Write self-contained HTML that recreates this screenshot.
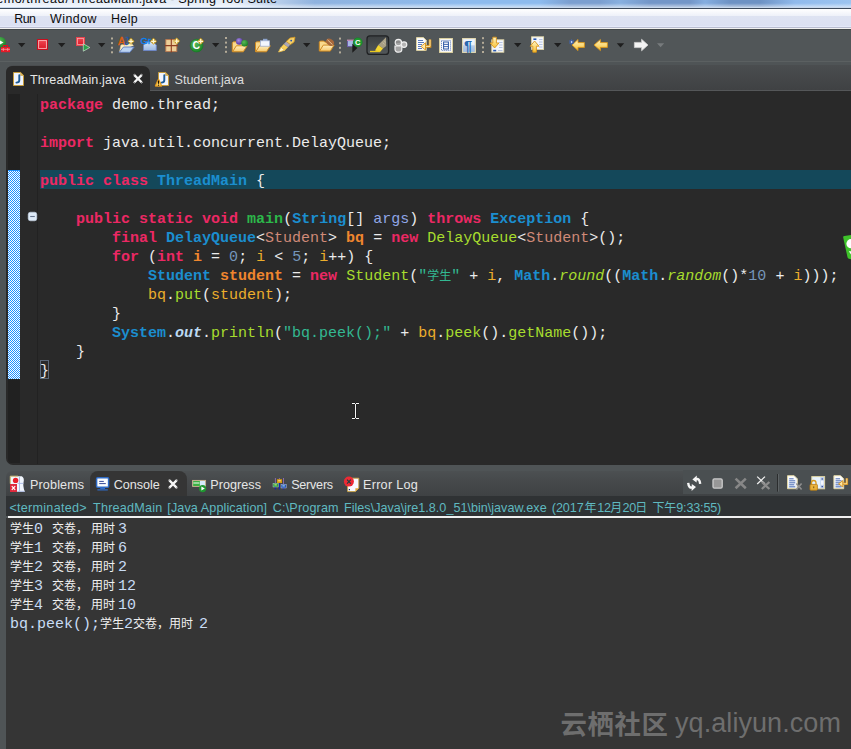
<!DOCTYPE html>
<html lang="zh">
<head>
<meta charset="utf-8">
<title>ThreadMain.java - Spring Tool Suite</title>
<style>
html,body{margin:0;padding:0;}
body{width:851px;height:749px;overflow:hidden;position:relative;background:#4f5456;font-family:"Liberation Sans","Noto Sans CJK SC",sans-serif;}
.abs{position:absolute;}
#title{left:0;top:0;width:851px;height:7px;overflow:hidden;background:linear-gradient(180deg,rgba(255,255,255,0) 45%,rgba(255,255,255,0.5) 100%),linear-gradient(90deg,#e8eff9 0,#e5edf8 235px,rgba(229,237,248,0) 315px),linear-gradient(90deg,#8fb2de 300px,#8dbbee 470px,#8dbbee 540px,#7b9fd0 570px,#7b9fd0 600px,#88b0e0 620px,#7396c8 650px,#7396c8 690px,#85aee0 705px,#6d92c4 730px,#6d92c4 760px,#90baec 795px,#9cc4f0 851px);}
#title .t{position:absolute;top:-8.8px;font-size:12.6px;color:#0a0a0a;white-space:pre;line-height:16px;}
#tline0{left:0;top:7px;width:851px;height:1px;background:#c8d8ec;}
#tline{left:0;top:8px;width:851px;height:1px;background:#3c4a5c;}
#menu{left:0;top:9px;width:851px;height:18px;background:linear-gradient(180deg,#ffffff 0,#eef1f9 38%,#dee3f2 40%,#dbe0f2 94%,#e4e9f8 95%);}
#menu span{position:absolute;top:2px;font-size:12.4px;line-height:17px;color:#0c0c0c;}
#mline{left:0;top:27px;width:851px;height:1px;background:#b8bcd0;}
#mline2{left:0;top:28px;width:851px;height:1px;background:#f0f0f0;}
#toolbar{left:0;top:29px;width:851px;height:32px;background:#515658;border-top:1px solid #43484a;box-sizing:border-box;}
#tb2{left:0;top:61px;width:851px;height:1px;background:#5b6061;}
/* editor */
#edtabs{left:6px;top:65px;width:845px;height:26px;background:linear-gradient(180deg,#4a4d4f 0,#3f4143 100%);border-top-left-radius:8px;}
#edtabline{left:6px;top:90px;width:845px;height:1px;background:#555759;}
#acttab{left:6px;top:66px;width:144px;height:26px;background:#292929;border-top-left-radius:6px;border-top-right-radius:7px;}
.tabtxt{position:absolute;font-size:12.6px;line-height:16px;color:#e6e6e6;white-space:pre;}
#editor{left:6px;top:91px;width:845px;height:373.5px;background:#292929;border-bottom-left-radius:7px;}
#ruler{left:8px;top:94px;width:12px;height:369px;background:#212121;border-bottom-left-radius:4px;}
#blue{left:8px;top:170px;width:12px;height:209px;background-color:#1e90ff;background-image:linear-gradient(45deg,#fff 25%,transparent 25%,transparent 75%,#fff 75%),linear-gradient(45deg,#fff 25%,transparent 25%,transparent 75%,#fff 75%);border-top:1px solid #1e90ff;box-sizing:border-box;background-size:2px 2px;background-position:1px 0,0 1px;}
#gline{left:37px;top:94px;width:1px;height:370px;background:#222222;}
#hl{left:40px;top:170px;width:811px;height:19px;background:#14485a;}
#brk{left:40px;top:360px;width:9px;height:19px;box-sizing:border-box;border:1px solid #5c6878;}
#code{left:40px;top:96px;font-family:"Liberation Mono","Noto Sans CJK SC",monospace;font-size:15px;line-height:19px;color:#ececec;white-space:pre;}
#code div{height:19px;}
.k{color:#ec2864;font-weight:bold;}
.c{color:#1b8ecf;font-weight:bold;}
.m{color:#2cb84a;font-weight:bold;}
.p{color:#90a6e6;}
.ta{color:#d08a78;}
.vd{color:#f0862e;font-weight:bold;}
.v{color:#ecae2c;}
.n{color:#7596ba;}
.f{color:#a7dc2e;}
.fi{color:#a7dc2e;font-style:italic;}
.s{color:#33b892;}
.o{color:#bcd9f2;font-weight:bold;font-style:italic;}
.cj{display:inline-block;width:12px;font-size:12px;text-align:center;}
/* bottom */
#bttabs{left:6px;top:471px;width:845px;height:25px;background:linear-gradient(180deg,#4c5052 0,#474a4c 35%,#3f4244 100%);border-top-left-radius:6px;}
#bttool{left:683px;top:470px;width:168px;height:24px;background:#4a4f51;}
#contab{left:90px;top:471px;width:97px;height:26px;background:#353535;border-top-left-radius:8px;border-top-right-radius:8px;}
#desc{left:6px;top:495.5px;width:845px;height:20.5px;background:#2f3234;}
#desc span{position:absolute;top:4.8px;font-size:12.6px;line-height:16px;color:#5fb9c0;white-space:pre;}
#desc span.dz{font-size:12px;top:4.1px;}
#wline{left:8px;top:516px;width:843px;height:2px;background:#f0f0f0;}
#console{left:6px;top:518px;width:845px;height:231px;background:#353535;}
#out{left:10px;top:520px;font-family:"Liberation Mono","Noto Sans CJK SC",monospace;font-size:15px;line-height:19px;color:#c8dcf4;white-space:pre;}
#out div{height:19px;}
#out .z{display:inline-block;width:12px;font-size:12px;text-align:center;color:#f0f0f0;}
#out .zl{margin-left:3px;}
#out .zr{margin-right:3px;}
#out .sp{display:inline-block;width:6px;}
#wm1{left:560.5px;top:706px;font-size:26.4px;line-height:38px;color:#6e6e6e;white-space:pre;font-weight:bold;letter-spacing:0.6px;font-family:"Liberation Sans","Noto Sans CJK SC",sans-serif;}
#wm2{left:675px;top:706px;font-size:27px;line-height:34px;color:#6e6e6e;white-space:pre;letter-spacing:0.07px;}
</style>
</head>
<body>
<div id="title" class="abs"><div class="t" style="right:786px;letter-spacing:0.5px">demo/thread</div><div class="t" style="left:65.5px;letter-spacing:0.23px">/ThreadMain.java - Spring Tool Suite</div></div>
<div id="tline0" class="abs"></div><div id="tline" class="abs"></div>
<div id="menu" class="abs"><span style="left:14.2px;letter-spacing:-0.5px">Run</span><span style="left:50px;letter-spacing:0.5px">Window</span><span style="left:111px;letter-spacing:0.4px">Help</span></div>
<div id="mline" class="abs"></div><div id="mline2" class="abs"></div>
<div id="toolbar" class="abs"></div>
<div id="tb2" class="abs"></div>
<!--TB-->
<svg id="tbsvg" class="abs" style="left:0;top:30px" width="851" height="32" viewBox="0 30 851 32">
<defs>
<linearGradient id="gRed" x1="0" y1="0" x2="0" y2="1"><stop offset="0" stop-color="#f04a55"/><stop offset="1" stop-color="#d81424"/></linearGradient>
<linearGradient id="gFold" x1="0" y1="0" x2="0" y2="1"><stop offset="0" stop-color="#fff0c0"/><stop offset="1" stop-color="#f6c76a"/></linearGradient>
<linearGradient id="gYel" x1="0" y1="0" x2="0" y2="1"><stop offset="0" stop-color="#fff6c8"/><stop offset="1" stop-color="#f8c030"/></linearGradient>
<linearGradient id="gBlueBox" x1="0" y1="0" x2="0" y2="1"><stop offset="0" stop-color="#d8e6f8"/><stop offset="1" stop-color="#9cb8e0"/></linearGradient>
<radialGradient id="gGreen" cx="0.4" cy="0.35" r="0.7"><stop offset="0" stop-color="#58b855"/><stop offset="1" stop-color="#168026"/></radialGradient>
<radialGradient id="gPurple" cx="0.4" cy="0.35" r="0.7"><stop offset="0" stop-color="#a890e0"/><stop offset="1" stop-color="#4a2a98"/></radialGradient>
<g id="dd"><path d="M0 0 H7.4 L3.7 4.2 Z" fill="#1e1e1e"/></g>
<g id="sep"><rect x="0" y="0" width="2" height="2"/><rect x="0" y="4.6" width="2" height="2"/><rect x="0" y="9.2" width="2" height="2"/><rect x="0" y="13.8" width="2" height="2"/></g>
<g id="spark"><path d="M3.5 0 L7 3.5 L3.5 7 L0 3.5 Z" fill="#c79a1c"/><path d="M3.5 1.2 V5.8 M1.2 3.5 H5.8" stroke="#fff8d8" stroke-width="1.3"/></g>
<g id="folder"><path d="M0.5 11.5 V2.5 L1.5 1.5 H5 L6 2.5 H11.5 V5" fill="#f9d98c" stroke="#cf8a22"/><path d="M0.7 11.5 L4.5 5.5 H15.3 L11.5 11.5 Z" fill="url(#gFold)" stroke="#cf8a22"/></g>
</defs>
<!-- run ext tools -->
<circle cx="0.5" cy="42.5" r="5.5" fill="url(#gGreen)"/><path d="M-1 40 L3.5 42.5 L-1 45Z" fill="#fff"/>
<path d="M3.5 47 V45.5 H7.5 V47" fill="none" stroke="#e01020" stroke-width="1.2"/><rect x="1" y="47" width="9" height="5.2" fill="#e41a28"/><path d="M1 49.3 H10 M3.3 48 V51 M7.7 48 V51" stroke="#f8a0a0" stroke-width="0.8"/>
<use href="#dd" x="18" y="43"/>
<rect x="37.5" y="39.5" width="10" height="10" fill="url(#gRed)" stroke="#c80e1e"/><rect x="38.6" y="40.6" width="7.8" height="7.8" fill="none" stroke="#f9b4b8" stroke-width="0.9"/>
<use href="#dd" x="58" y="43"/>
<rect x="76.5" y="37.5" width="8" height="8" fill="url(#gRed)" stroke="#e8444e"/><rect x="77.5" y="38.5" width="6" height="6" fill="none" stroke="#f7a6aa" stroke-width="0.8"/>
<path d="M83.3 43.8 L89.8 47.5 L83.3 51.2 Z" fill="#2aa04a" stroke="#e0f0e0" stroke-width="0.6"/>
<use href="#dd" x="98" y="43"/>
<use href="#sep" x="111" y="37.5" fill="#b4ab98"/>
<!-- AJ -->
<path d="M119.5 52 L121 45 L131 43.5 L133.5 45.5" fill="#fff1c4" stroke="#f0d898" stroke-width="0.6"/>
<path d="M119.3 52.3 L123.5 47 H134.2 L129.8 52.3 Z" fill="#bcd4f2" stroke="#5e7ec0" stroke-width="0.9"/>
<text x="117.9" y="45.2" font-family="Liberation Sans, sans-serif" font-size="10.6" fill="#e2600c" stroke="#e2600c" stroke-width="0.35">A</text>
<text x="124.2" y="45.2" font-family="Liberation Sans, sans-serif" font-size="10" fill="#2458a8" stroke="#2458a8" stroke-width="0.3">J</text>
<use href="#spark" x="127.5" y="37.8"/>
<!-- Gr -->
<path d="M143.5 50.5 V45 L147 41.8 H153 L156.3 45 V50.5 Z" fill="url(#gBlueBox)" stroke="#6c86c8" stroke-width="0.9"/>
<text x="140.4" y="43.9" font-family="Liberation Sans, sans-serif" font-size="9.4" fill="#0a82f4" stroke="#0a82f4" stroke-width="0.35">Gr</text>
<use href="#spark" x="150" y="37.8"/>
<!-- package grid -->
<rect x="165.8" y="39.6" width="11" height="12" fill="#edcf98" stroke="#b9784e" stroke-width="0.9"/><path d="M171.3 38.8 V52.6 M164.8 45.6 H178" stroke="#8e3f22" stroke-width="1.1"/>
<use href="#spark" x="173.2" y="37.6"/>
<!-- green C -->
<circle cx="196.6" cy="45.6" r="6.4" fill="url(#gGreen)" stroke="#157a24" stroke-width="0.6"/>
<text x="192.4" y="49.4" font-family="Liberation Sans, sans-serif" font-weight="bold" font-size="10.5" fill="#fff">C</text>
<use href="#spark" x="197.2" y="37.8"/>
<use href="#dd" x="212" y="43"/>
<use href="#sep" x="225" y="37" fill="#b4ab98"/>
<!-- folder1 -->
<use href="#folder" x="231.8" y="40.3"/>
<circle cx="239.3" cy="41.4" r="3.3" fill="url(#gPurple)"/><circle cx="244.6" cy="43.2" r="3.3" fill="url(#gGreen)"/>
<!-- folder2 -->
<use href="#folder" x="255" y="40.3"/>
<rect x="263" y="38.8" width="4.4" height="2.4" fill="#8ea4cc"/><rect x="260.5" y="40.8" width="9" height="5.4" fill="#f4f7fe" stroke="#a8b8dc" stroke-width="0.8"/>
<!-- pen -->
<path d="M278.6 52 L281 47.2 L285 50.2 Z" fill="#fff6d0" stroke="#f2c040" stroke-width="0.8"/>
<path d="M281 47.2 L283.8 44 L288 47.2 L285 50.2 Z" fill="#f8d058"/>
<path d="M283.8 44 L286.3 41.4 L290.4 44.6 L288 47.2 Z" fill="#aaa6b4"/>
<path d="M286.3 41.4 L290 38 L295 37.2 L294 42 L290.4 44.6 Z" fill="#f3cf6c" stroke="#d89a20" stroke-width="0.8"/>
<circle cx="291.2" cy="40.6" r="0.9" fill="#2050b0"/>
<use href="#dd" x="303" y="43"/>
<!-- folder3 -->
<use href="#folder" x="318.8" y="39.6"/>
<ellipse cx="330" cy="42.2" rx="4.3" ry="3.2" transform="rotate(35 330 42.2)" fill="#a8683a"/><path d="M327.5 39.8 L332.5 44.6" stroke="#e8c8a0" stroke-width="0.9"/>
<use href="#sep" x="339" y="37.6" fill="#b4ab98"/>
<!-- open type in hierarchy-ish -->
<rect x="347.5" y="40.6" width="6" height="6" fill="#a8b8e4" stroke="#6a5aa8" stroke-width="0.9"/><path d="M347 40.2 H354" stroke="#e8a0c0" stroke-width="1"/>
<path d="M352.3 43.6 L357.4 48 L352.3 52.8 Z" fill="#1c1c1c"/>
<circle cx="357.8" cy="42.3" r="4.5" fill="#1f9a32" stroke="#0f7a20" stroke-width="0.5"/>
<text x="354.9" y="45.1" font-family="Liberation Sans, sans-serif" font-weight="bold" font-size="7.6" fill="#fff">C</text>
<!-- toggled highlighter -->
<linearGradient id="gTog" x1="0" y1="0" x2="0" y2="1"><stop offset="0" stop-color="#3c4042"/><stop offset="1" stop-color="#53585a"/></linearGradient><rect x="367" y="35.8" width="21.6" height="18.6" rx="3" fill="url(#gTog)" stroke="#202224" stroke-width="1.3"/>
<path d="M378.2 45 L386 37.2 L386.2 46 L383 48.6 Z" fill="#a89f84"/><path d="M382.6 42.6 L384.6 44.4 M384 40.8 L385.8 42.4" stroke="#c8c2b0" stroke-width="0.7"/>
<path d="M375 50.4 L378.2 45 L383 48.6 L380 52 Z" fill="#f4d630"/>
<path d="M370 51.5 H380" stroke="#e8c820" stroke-width="1.3"/>
<!-- people (gray) -->
<g fill="#a4a4a4" stroke="#f0f0f0" stroke-width="1.2"><circle cx="404" cy="44.6" r="2.8" fill="#b4b4b4"/><circle cx="398.4" cy="42.6" r="3.2"/><path d="M395 46 h6.8 v3.6 a3.4 2.6 0 0 1 -6.8 0z"/></g>
<path d="M396 42 h4" stroke="#707070" stroke-width="0.9"/>
<!-- word wrap doc -->
<path d="M416.5 37.6 H423.5 L426.2 40.3 V50.4 H416.5 Z" fill="#fbfcff" stroke="#dfd3a0" stroke-width="1"/>
<path d="M418 40.5 h5 M418 42.5 h6 M418 44.5 h4 M418 46.5 h3 M418 48.5 h4" stroke="#4a6cb4" stroke-width="0.9"/>
<path d="M430 39.5 V46.4 H424.5" fill="none" stroke="#d89018" stroke-width="2.6"/><path d="M430 39.5 V46.4 H424.5" fill="none" stroke="#fff0c0" stroke-width="0.9"/>
<path d="M425.5 42.8 L421 46.4 L425.5 50 Z" fill="#ffe9a8" stroke="#d89018" stroke-width="0.9"/>
<!-- block selection -->
<rect x="439.6" y="38.6" width="12.8" height="13.8" fill="#fdfdff" stroke="#ddd2a0" stroke-width="1.1"/>
<rect x="441.5" y="40.6" width="9" height="9.8" fill="none" stroke="#3e62ac" stroke-width="0.9" stroke-dasharray="1 1"/>
<rect x="443.6" y="42" width="4.8" height="7" fill="none" stroke="#2c56a4" stroke-width="1"/><path d="M443.6 44.4 h4.8 M443.6 46.6 h4.8" stroke="#2c56a4" stroke-width="0.9"/>
<!-- pilcrow -->
<rect x="462.6" y="38.6" width="12.8" height="13.8" fill="url(#gBlueBox)" stroke="#e4dab0" stroke-width="1.1"/><rect x="463.3" y="39.3" width="11.4" height="6" fill="#f8faff" opacity="0.8"/>
<text x="464" y="51.2" font-family="Liberation Sans, sans-serif" font-weight="bold" font-size="14.5" fill="#2a68b0">¶</text>
<use href="#sep" x="482" y="37.2" fill="#b4ab98"/>
<!-- next annotation -->
<rect x="491.8" y="39.8" width="12" height="12.4" fill="#f4f7fd" stroke="#e0d6a8" stroke-width="0.9"/>
<path d="M499 42.5 h3.5 M499 45 h3.5 M499 47.5 h3.5 M498 50.5 h4.5" stroke="#a8b8d8" stroke-width="0.8"/><rect x="493.2" y="49.8" width="3" height="1.6" fill="#2858b0"/>
<path d="M492.8 37.2 H496.4 V43 H499 L494.6 48 L490.2 43 H492.8 Z" fill="url(#gYel)" stroke="#d89418" stroke-width="0.9"/>
<use href="#dd" x="514" y="43"/>
<!-- prev annotation -->
<rect x="531.6" y="36.8" width="12" height="12.6" fill="#f4f7fd" stroke="#e0d6a8" stroke-width="0.9"/>
<path d="M539 39.5 h3.5 M539 42 h3.5 M539 44.5 h3.5 M539 47 h3.5" stroke="#a8b8d8" stroke-width="0.8"/><rect x="533.4" y="38.4" width="3" height="1.6" fill="#2858b0"/>
<path d="M532.8 52.2 H536.4 V46.2 H539 L534.6 41 L530.2 46.2 H532.8 Z" fill="url(#gYel)" stroke="#d89418" stroke-width="0.9"/>
<use href="#dd" x="554" y="43"/>
<!-- last edit -->
<path d="M572 45 L578 39.5 V42.6 H584.4 V47.4 H578 V50.6 Z" fill="url(#gYel)" stroke="#d89418" stroke-width="0.9"/>
<path d="M569.6 40 l4 4 M573.6 40 l-4 4 M571.6 39.4 v5.2 M569 42 h5.2" stroke="#3a6ad0" stroke-width="0.8"/><circle cx="571.6" cy="42" r="0.8" fill="#fff"/>
<!-- back -->
<path d="M594 45 L600.4 39.5 V42.6 H607.4 V47.4 H600.4 V50.6 Z" fill="url(#gYel)" stroke="#d89418" stroke-width="0.9"/>
<use href="#dd" x="616.8" y="43.2"/>
<!-- forward (white) -->
<path d="M648 45 L641.6 39.3 V42.4 H634.4 V47.6 H641.6 V50.8 Z" fill="#f4f4f4" stroke="#d0d0d0" stroke-width="0.8"/>
<path d="M657 43.2 h7.2 l-3.6 4 Z" fill="#777b7d"/>
</svg>
<!--/TB-->

<div id="edtabs" class="abs"></div>
<div id="edtabline" class="abs"></div>
<div id="acttab" class="abs"></div>
<div class="tabtxt" style="left:30.0px;top:71.6px;letter-spacing:0.126px;">ThreadMain.java</div>
<div class="tabtxt" style="left:174.6px;top:71.6px;letter-spacing:-0.053px;color:#dcdcdc;">Student.java</div>

<div id="editor" class="abs"></div>
<div id="ruler" class="abs"></div>
<div id="blue" class="abs"></div>
<div id="gline" class="abs"></div>
<div id="hl" class="abs"></div>
<div id="brk" class="abs"></div>
<div id="code" class="abs"><div><span class="k">package</span> demo.thread;</div><div> </div><div><span class="k">import</span> java.util.concurrent.DelayQueue;</div><div> </div><div><span class="k">public</span> <span class="k">class</span> <span class="c">ThreadMain</span> {</div><div> </div><div>    <span class="k">public</span> <span class="k">static</span> <span class="k">void</span> <span class="m">main</span>(<span class="c">String</span>[] <span class="p">args</span>) <span class="k">throws</span> <span class="c">Exception</span> {</div><div>        <span class="k">final</span> <span class="c">DelayQueue</span>&lt;<span class="ta">Student</span>&gt; <span class="vd">bq</span> = <span class="k">new</span> <span class="f">DelayQueue</span>&lt;<span class="ta">Student</span>&gt;();</div><div>        <span class="k">for</span> (<span class="k">int</span> <span class="vd">i</span> = <span class="n">0</span>; <span class="v">i</span> &lt; <span class="n">5</span>; <span class="v">i</span>++) {</div><div>            <span class="c">Student</span> <span class="vd">student</span> = <span class="k">new</span> <span class="f">Student</span>(<span class="s">"<span class="cj">学</span><span class="cj">生</span>"</span> + <span class="v">i</span>, <span class="c">Math</span>.<span class="fi">round</span>((<span class="c">Math</span>.<span class="fi">random</span>()*<span class="n">10</span> + <span class="v">i</span>)));</div><div>            <span class="v">bq</span>.<span class="f">put</span>(<span class="v">student</span>);</div><div>        }</div><div>        <span class="c">System</span>.<span class="o">out</span>.<span class="f">println</span>(<span class="s">"bq.peek();"</span> + <span class="v">bq</span>.<span class="f">peek</span>().<span class="f">getName</span>());</div><div>    }</div><div>}</div></div>

<div id="bttabs" class="abs"></div>
<div id="bttool" class="abs"></div>
<div id="contab" class="abs"></div>
<div class="tabtxt" style="left:30.0px;top:476.7px;letter-spacing:0.137px;">Problems</div>
<div class="tabtxt" style="left:113.8px;top:476.7px;letter-spacing:-0.031px;">Console</div>
<div class="tabtxt" style="left:210.2px;top:476.7px;letter-spacing:0.049px;">Progress</div>
<div class="tabtxt" style="left:291.2px;top:476.7px;letter-spacing:-0.242px;">Servers</div>
<div class="tabtxt" style="left:363.0px;top:476.7px;letter-spacing:0.278px;">Error Log</div>
<div id="desc" class="abs"><span style="left:3.4px;letter-spacing:0.273px">&lt;terminated&gt;</span><span style="left:87.0px;letter-spacing:0.220px">ThreadMain</span><span style="left:161.3px;letter-spacing:0.105px">[Java Application]</span><span style="left:266.8px;letter-spacing:0.151px">C:\Program</span><span style="left:338.0px;letter-spacing:0.010px">Files\Java\jre1.8.0_51\bin\javaw.exe</span><span style="left:545.8px;letter-spacing:-0.064px">(2017</span><span style="left:591.3px;letter-spacing:-0.258px">12</span><span style="left:616.6px;letter-spacing:-0.400px">20</span><span style="left:670.3px;letter-spacing:-0.177px">9:33:55)</span><span class="dz" style="left:578.6px">年</span><span class="dz" style="left:604.2px">月</span><span class="dz" style="left:629.2px">日</span><span class="dz" style="left:646.4px">下</span><span class="dz" style="left:658.2px">午</span></div>
<div id="wline" class="abs"></div>
<div id="console" class="abs"></div>
<div id="out" class="abs"><div><span class="z">学</span><span class="z">生</span>0 <span class="z">交</span><span class="z">卷</span><span class="z">，</span><span class="z zl">用</span><span class="z zr">时</span>3</div><div><span class="z">学</span><span class="z">生</span>1 <span class="z">交</span><span class="z">卷</span><span class="z">，</span><span class="z zl">用</span><span class="z zr">时</span>6</div><div><span class="z">学</span><span class="z">生</span>2 <span class="z">交</span><span class="z">卷</span><span class="z">，</span><span class="z zl">用</span><span class="z zr">时</span>2</div><div><span class="z">学</span><span class="z">生</span>3 <span class="z">交</span><span class="z">卷</span><span class="z">，</span><span class="z zl">用</span><span class="z zr">时</span>12</div><div><span class="z">学</span><span class="z">生</span>4 <span class="z">交</span><span class="z">卷</span><span class="z">，</span><span class="z zl">用</span><span class="z zr">时</span>10</div><div>bq.peek();<span class="z">学</span><span class="z">生</span>2<span class="z">交</span><span class="z">卷</span><span class="z">，</span><span class="z">用</span><span class="z">时</span><span class="sp"> </span>2</div></div>
<!--ED-->
<svg class="abs" style="left:0;top:64px" width="851" height="32" viewBox="0 64 851 32">
<defs>
<g id="jfile"><path d="M0.5 0.5 H7.6 L10.5 3.4 V13.5 H0.5 Z" fill="#f1f5fd" stroke="#c69c3c"/><path d="M7.6 0.5 L10.5 3.4 H7.6 Z" fill="#dcb65c" stroke="#c69c3c" stroke-width="0.6"/><path d="M6.3 3.3 V8.3 Q6.3 10.6 3.4 10.6" fill="none" stroke="#1d5c98" stroke-width="1.9" stroke-linecap="round"/></g>
<g id="closex"><path d="M1.4 1.4 L8.6 8.6 M8.6 1.4 L1.4 8.6" stroke="#f6f6f6" stroke-width="2.3"/><path d="M0.4 1.3 l1.2 -0.8 M9.6 1.3 l-1.2 -0.8 M0.4 8.7 l1.2 0.8 M9.6 8.7 l-1.2 0.8" stroke="#f6f6f6" stroke-width="0.9"/></g>
</defs>
<use href="#jfile" x="13" y="72"/>
<use href="#closex" x="133" y="73.7"/>
<use href="#jfile" x="158" y="72"/>
<path d="M158.5 80 L161.2 85.8 H155.8 Z" fill="#f8c048" stroke="#e09a20" stroke-width="2" stroke-linejoin="round"/><path d="M158.5 80.4 L160.8 85.4 H156.2 Z" fill="#fbd060"/><path d="M158.5 80.6 v3.2" stroke="#1a1000" stroke-width="1.1"/><rect x="157.95" y="84.6" width="1.1" height="1.1" fill="#1a1000"/>
</svg>
<!--/ED-->
<!--BT-->
<svg class="abs" style="left:0;top:468px" width="851" height="30" viewBox="0 468 851 30">
<defs>
<linearGradient id="gDoc" x1="0" y1="0" x2="0" y2="1"><stop offset="0" stop-color="#ffffff"/><stop offset="1" stop-color="#e4ecfa"/></linearGradient>
<g id="doc2"><path d="M0.5 0.5 H7.2 L10.3 3.6 V13.5 H0.5 Z" fill="url(#gDoc)" stroke="#e0d5a4" stroke-width="1"/><path d="M2.2 3.6 h4.4 M2.2 5.6 h6 M2.2 7.6 h6 M2.2 9.6 h5 M2.2 11.6 h6" stroke="#4466b0" stroke-width="0.95"/></g>
</defs>
<!-- problems -->
<path d="M10.3 476.2 H21.8 Q24.6 478 23.6 482 Q22.6 486 24.8 491.8 H10.3 Z" fill="#f1f6fd"/><path d="M10.3 483.6 V476.2 H18" fill="none" stroke="#d2c078" stroke-width="1"/>
<path d="M19.5 476.5 V491.5 M17.6 483.4 H23.4 M17.8 491.3 H24.8" stroke="#a9b9e4" stroke-width="0.9"/>
<circle cx="15.6" cy="480.4" r="2.7" fill="#e8202c"/>
<rect x="10" y="484" width="7" height="8" fill="#de2a3e"/><path d="M11.8 486.2 l3.4 3.6 M15.2 486.2 l-3.4 3.6" stroke="#fff" stroke-width="1.2"/>
<!-- console -->
<rect x="96.6" y="477.7" width="12" height="9.6" rx="1" fill="#fbfdff" stroke="#2f6ac4" stroke-width="1.5"/><path d="M99.2 481.4 h4.6 M99.2 483.6 h6.6" stroke="#2a3f94" stroke-width="0.95"/><path d="M100.2 488.4 h4.8 M97.4 489.8 h10.4" stroke="#2f6ac4" stroke-width="1.2"/>
<use href="#closex" x="168" y="479"/>
<!-- progress -->
<rect x="192.6" y="480.4" width="13" height="6" fill="#d5ebfa" stroke="#c8b088" stroke-width="0.9"/><rect x="193.1" y="481" width="6.8" height="5" fill="#3db043"/><path d="M193.4 483 h6" stroke="#e8f8e8" stroke-width="1.1"/>
<circle cx="202.6" cy="488.6" r="3.6" fill="#1f9630"/><path d="M201.4 486.6 L204.8 488.6 L201.4 490.6 Z" fill="#fff"/>
<!-- servers -->
<path d="M275.4 478 V483" stroke="#8c6aa8" stroke-width="1"/><path d="M279.4 478 V480" stroke="#8c6aa8" stroke-width="1"/><path d="M283.5 478 V484" stroke="#8c6aa8" stroke-width="1"/>
<path d="M275.4 487 V489.4 M279.4 483 V489.4 M283.5 488 V489.4" stroke="#1626a8" stroke-width="1.2"/>
<rect x="277" y="479.2" width="5" height="3.8" fill="#d89a10"/><path d="M278.2 480.8 h2.6" stroke="#fff0a0" stroke-width="0.9"/>
<rect x="273" y="483.2" width="5.2" height="3.8" fill="#2a9a50" stroke="#c8ecd0" stroke-width="0.4"/><path d="M274.4 484.9 h2.4" stroke="#f0f060" stroke-width="1"/>
<rect x="281" y="484.2" width="5.2" height="3.8" fill="#2a56b8" stroke="#d0dcf4" stroke-width="0.4"/><path d="M282.4 485.9 h2.4" stroke="#b8f0e8" stroke-width="1"/>
<!-- error log -->
<path d="M347.6 478.2 H358.8 V488.2 L355.4 491.6 H347.6 Z" fill="#f6f9ff" stroke="#c9a040" stroke-width="0.9"/><path d="M358.8 488.2 H355.4 V491.6 Z" fill="#e3ac3e"/><rect x="348.8" y="489" width="1.2" height="1.2" fill="#1a2a70"/>
<circle cx="348.9" cy="481.6" r="5" fill="#ec2a34"/><path d="M347 479.6 l3.8 4 M350.8 479.6 l-3.8 4" stroke="#1a4040" stroke-width="1.1"/>
<!-- right toolbar -->
<g fill="none" stroke="#f6f6f6" stroke-width="2.4"><path d="M695.4 479.4 Q699.6 477.6 700.2 483.8"/><path d="M693 487.2 Q688.8 489 688.2 482.8"/></g>
<path d="M692.4 479.6 L696.8 475.6 L696.6 482.6 Z M696 487 L691.6 491 L691.8 484 Z" fill="#f6f6f6"/>
<rect x="713" y="478.9" width="9.2" height="9.2" rx="1.4" fill="#979797" stroke="#cdcdcd" stroke-width="1.3"/>
<path d="M735.6 478.6 L745.8 488.2 M745.8 478.6 L735.6 488.2" stroke="#878787" stroke-width="2.6"/>
<path d="M757.2 476.6 L765 484 M765 476.6 L757.2 484" stroke="#efefef" stroke-width="1.3"/>
<path d="M761.8 482 L769.4 489 M769.4 482 L761.8 489" stroke="#8c8c8c" stroke-width="2.2"/>
<path d="M777.5 474 V491.6" stroke="#2b2d2e" stroke-width="1"/><path d="M778.5 474 V491.6" stroke="#5e6365" stroke-width="1"/>
<use href="#doc2" x="787" y="475.2"/><path d="M796.4 483.6 L801.6 489.6 M801.6 483.6 L796.4 489.6" stroke="#8e8e8e" stroke-width="1.6"/>
<rect x="811.8" y="476.6" width="12.8" height="12.2" fill="#e6f2fd" stroke="#dcd2a0" stroke-width="1"/><rect x="820.4" y="477.2" width="3.6" height="11" fill="#bccdea"/><rect x="821" y="480.6" width="2.6" height="4.2" fill="#f4f7ff"/><rect x="821.6" y="478.4" width="1.2" height="1.2" fill="#223a88"/><rect x="821.6" y="486" width="1.2" height="1.2" fill="#223a88"/>
<path d="M811.4 484.6 V482.8 a2.3 2.3 0 0 1 4.6 0 V484.6" fill="none" stroke="#d89a1c" stroke-width="1.3"/><rect x="810" y="484.4" width="7.4" height="5.8" rx="0.8" fill="#eab23a" stroke="#b87a10" stroke-width="0.8"/><rect x="813.3" y="486.4" width="0.9" height="1.8" fill="#6a4a08"/>
<use href="#doc2" x="833.4" y="475.2"/>
<path d="M846.8 478.2 V483.8 H842.6" fill="none" stroke="#d18c1a" stroke-width="2.6"/><path d="M846.8 478.4 V483.8 H842.6" fill="none" stroke="#ffeaa8" stroke-width="0.9"/><path d="M842.8 480.6 L838.6 483.8 L842.8 487 Z" fill="#ffe7a0" stroke="#d18c1a" stroke-width="0.9"/>
</svg>
<!--/BT-->
<!--MI-->
<svg class="abs" style="left:0;top:200px" width="851" height="230" viewBox="0 200 851 230">
<!-- fold -->
<rect x="28.2" y="212.2" width="8.6" height="8.6" rx="2.2" fill="#deebf8" stroke="#c4d2e4" stroke-width="0.6"/><path d="M30.2 216.5 H34.8" stroke="#66768f" stroke-width="1.1"/>
<!-- green badge -->
<path d="M843.2 237.4 Q842.9 236.1 844.4 235.9 L851 234.9 V259.3 L849 258.7 Q847.8 258.4 847.5 257.2 Z" fill="#3ec22a"/>
<circle cx="851" cy="243.7" r="4.6" fill="#ffffff"/><path d="M848.8 251.2 H851 V254.6 Z" fill="#ffffff"/>
<!-- I-beam -->
<path d="M352 403.5 H355 M356 403.5 H359 M352 418.5 H355 M356 418.5 H359 M355.5 404 V418" stroke="#1a1a1a" stroke-width="3" opacity="0.55"/>
<path d="M352 403.5 H355 M356 403.5 H359 M352 418.5 H355 M356 418.5 H359 M355.5 404 V418" stroke="#f4f4f4" stroke-width="1"/>
</svg>
<!--/MI-->
<div id="wm1" class="abs">云栖社区</div><div id="wm2" class="abs">yq.aliyun.com</div>
</body>
</html>
